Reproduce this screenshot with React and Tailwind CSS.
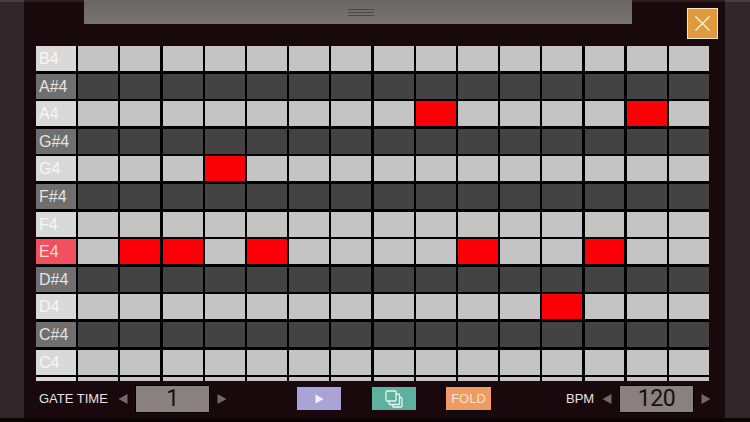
import { X } from "lucide-react";

const notes = ["B4", "A#4", "A4", "G#4", "G4", "F#4", "F4", "E4", "D#4", "D4", "C#4", "C4", ""];
const steps = Array.from({ length: 15 }, (_, i) => i);

// note -> active steps
const active = {
  A4: [8, 13],
  G4: [3],
  E4: [1, 2, 4, 9, 12],
  D4: [11],
};

function Arrow({ dir }) {
  return (
    <svg width="10" height="12" viewBox="0 0 10 12" className="shrink-0">
      <path d={dir === "left" ? "M9.5 1v10L0.5 6z" : "M0.5 1v10l9-5z"} fill="#6f6a6a" />
    </svg>
  );
}

function Stepper({ label, value, labelClass }) {
  return (
    <div className="flex items-center">
      <span className={`text-[13px] text-[#e6e2e2] ${labelClass}`}>{label}</span>
      <Arrow dir="left" />
      <div className="w-[75px] h-[28px] mx-[7px] bg-[#8a8080] border border-black flex items-center justify-center font-['Roboto',sans-serif] text-[23px] font-normal leading-none tracking-[-0.5px] text-[#141010]">
        {value}
      </div>
      <Arrow dir="right" />
    </div>
  );
}

function CopyIcon() {
  return (
    <svg width="18" height="18" viewBox="0 0 18 18" fill="none" stroke="#e2f6f0" strokeWidth="1.3">
      <rect x="1" y="1" width="10" height="10" rx="1" />
      <path d="M11 4h2.500a1 1 0 0 1 1 1v8.500a1 1 0 0 1-1 1H5a1 1 0 0 1-1-1V11" />
      <path d="M14.500 7.500H16a1 1 0 0 1 1 1V16a1 1 0 0 1-1 1H8.500a1 1 0 0 1-1-1v-1.500" />
    </svg>
  );
}

export default function App() {
  return (
    <div className="w-[750px] h-[422px] overflow-hidden bg-[#0c0506] flex font-['Liberation_Sans',Arial,sans-serif]">
      <div className="w-[24px] h-[418px] bg-[#33262a] border-t-2 border-[#4a3c40]" />

      <div className="w-[701px] h-[418px] bg-[#1a090c] flex flex-col">
        {/* drag handle */}
        <div className="relative shrink-0 h-[46px]">
          <div className="absolute left-0 top-0 w-full h-[2px] bg-[#2c1c1f]" />
          <div className="relative ml-[60px] w-[548px] h-[24px] bg-gradient-to-b from-[#6a6666] to-[#787474] flex flex-col items-center justify-center gap-[2px] pl-[6px]">
            <div className="w-[26px] h-px bg-[#4c4848]" />
            <div className="w-[26px] h-px bg-[#4c4848]" />
            <div className="w-[26px] h-px bg-[#4c4848]" />
          </div>
          <button
            type="button"
            className="absolute left-[663px] top-[8px] w-[31px] h-[31px] bg-[#e09a3e] border border-[#f5e6d0] flex items-center justify-center"
          >
            <X size={27} strokeWidth={1.2} color="#fbeeda" />
          </button>
        </div>

        {/* note grid */}
        <div className="ml-[12px] w-[673px] h-[335px] bg-black overflow-hidden shrink-0">
          <div className="grid grid-cols-[40px_repeat(15,39.9px)] gap-x-[2.3px] gap-y-[2.6px] auto-rows-[25px]">
            {notes.map((note, r) => {
              const sharp = note.includes("#");
              const isRoot = note === "E4";
              return [
                <div
                  key={`${r}-label`}
                  className={`flex items-center pl-[3px] pt-[1px] text-[16px] leading-none ${
                    isRoot
                      ? "bg-[#f2505e] text-[#f6dede]"
                      : sharp
                        ? "bg-[#6f6f6f] text-[#e4e4e4]"
                        : "bg-[#d9d9d9] text-[#f6f6f6]"
                  }`}
                >
                  {note}
                </div>,
                ...steps.map((s) => {
                  const on = active[note]?.includes(s);
                  return (
                    <div
                      key={`${r}-${s}`}
                      className={on ? "bg-[#fb0007]" : sharp ? "bg-[#434343]" : "bg-[#c4c4c4]"}
                    />
                  );
                }),
              ];
            })}
          </div>
        </div>

        {/* controls */}
        <div className="flex items-center h-[35px] pl-[15px]">
          <Stepper label="GATE TIME" value="1" labelClass="w-[79px]" />
          <button
            type="button"
            className="ml-[70px] w-[44px] h-[23px] bg-[#a9a4d6] flex items-center justify-center"
          >
            <svg width="9" height="10" viewBox="0 0 9 10">
              <path d="M0.500 0.500v9l8-4.500z" fill="#f2f2fa" />
            </svg>
          </button>
          <button
            type="button"
            className="ml-[31px] w-[44px] h-[23px] bg-[#5fb09c] flex items-center justify-center"
          >
            <CopyIcon />
          </button>
          <button
            type="button"
            className="ml-[30px] w-[45px] h-[23px] bg-[#ef9c64] text-[13px] text-[#fbe0c8] flex items-center justify-center"
          >
            FOLD
          </button>
          <div className="ml-[75px]">
            <Stepper label="BPM" value="120" labelClass="w-[36px]" />
          </div>
        </div>
      </div>

      <div className="w-[25px] h-[418px] bg-[#33262a] border-t-2 border-[#4a3c40]" />
    </div>
  );
}
